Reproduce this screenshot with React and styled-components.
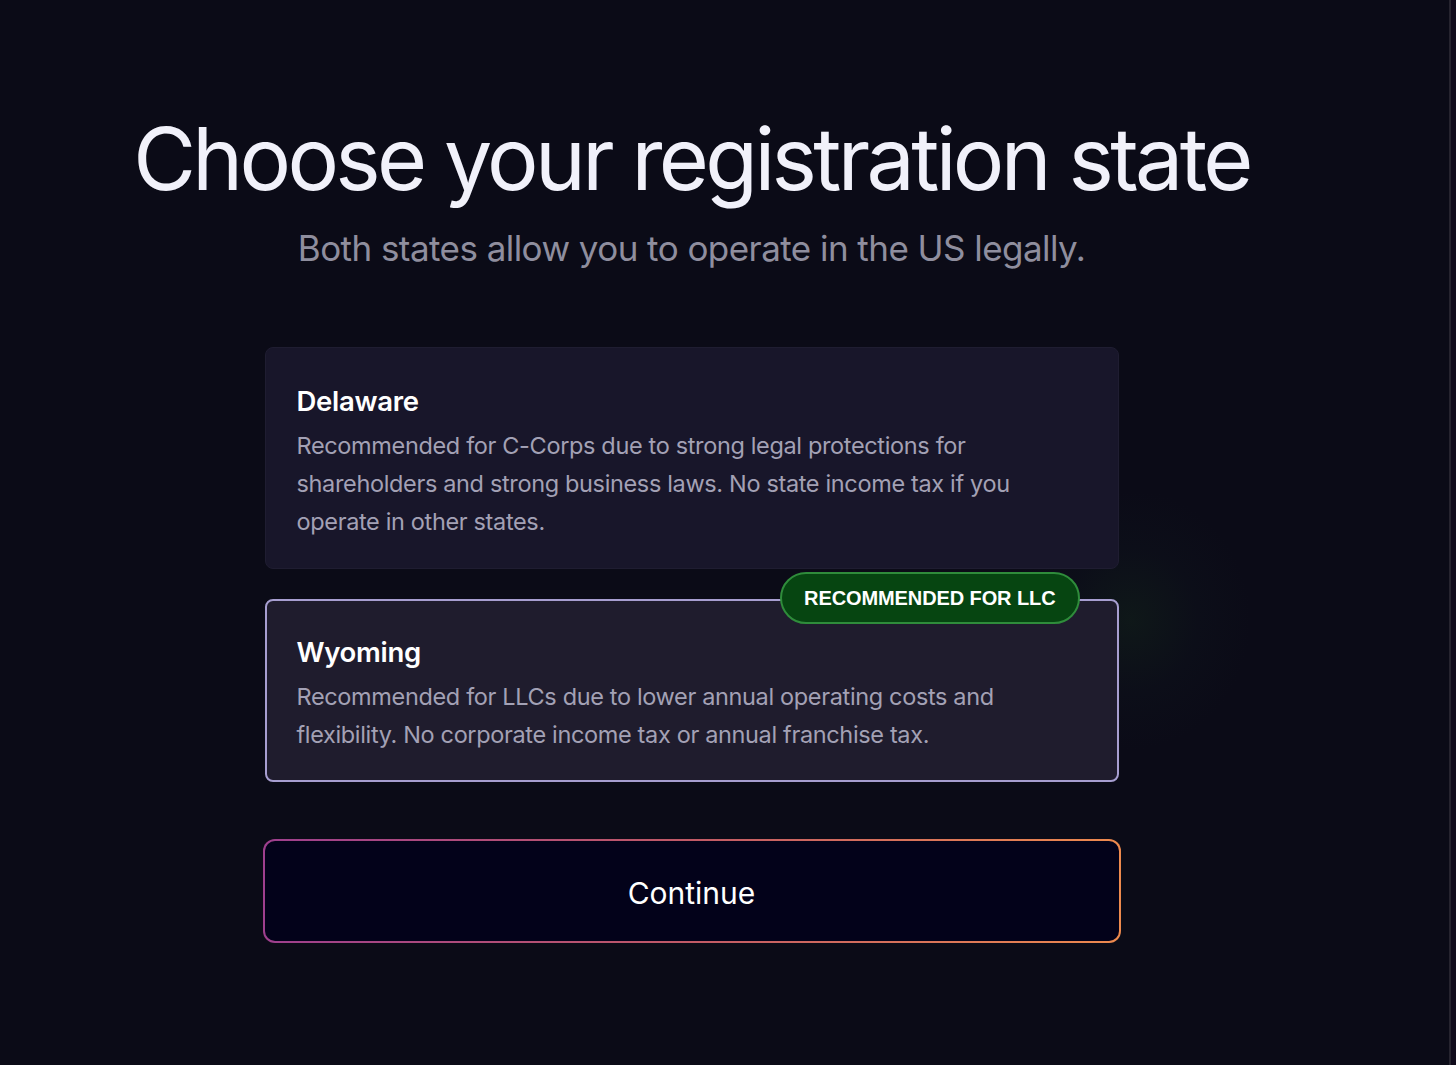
import React from 'react';
import styled, { createGlobalStyle } from 'styled-components';

const GlobalStyle = createGlobalStyle`
    html, body {
        margin: 0;
        padding: 0;
        background: #0b0b17;
    }
    body {
        font-family: Inter, "Noto Sans", sans-serif;
        color: #f2f2fa;
    }
`;

const Layout = styled.div`
    display: flex;
    min-height: 1065px;
    background: #0b0b17;
`;

const Main = styled.main`
    flex: 1;
    display: flex;
    flex-direction: column;
    align-items: center;
    padding: 107px 66px 0 0;
`;

const Edge = styled.div`
    width: 5px;
    border-left: 2px solid #26242f;
    background: #100b1b;
`;

const Title = styled.h1`
    margin: 0;
    font-size: 86px;
    font-weight: 400;
    letter-spacing: -3.65px;
    line-height: 104px;
    color: #f1f1fa;
`;

const Subtitle = styled.p`
    margin: 16px 0 0;
    font-size: 35px;
    font-weight: 400;
    letter-spacing: -0.55px;
    color: #8f8e9e;
`;

const Options = styled.div`
    position: relative;
    isolation: isolate;
    display: flex;
    flex-direction: column;
    gap: 30px;
    width: 854px;
    margin-top: 78px;
`;

const Glow = styled.div`
    position: absolute;
    right: -132px;
    top: 143px;
    width: 240px;
    height: 260px;
    border-radius: 50%;
    background: radial-gradient(closest-side, rgba(18, 34, 26, 0.55) 0%, rgba(14, 20, 28, 0.35) 55%, rgba(11, 11, 23, 0) 100%);
    pointer-events: none;
    z-index: -1;
`;

const Card = styled.div`
    position: relative;
    box-sizing: border-box;
    padding: ${p => (p.$selected ? '34px 30px 26px' : '36px 31px 27px')};
    border-radius: 8px;
    background: ${p => (p.$selected ? '#1f1c2d' : '#18162a')};
    border: ${p => (p.$selected ? '2px solid #a79ed0' : '1px solid #1f1d31')};
`;

const Name = styled.h2`
    margin: 0;
    font-size: 27.5px;
    font-weight: 600;
    letter-spacing: -0.3px;
    color: #ffffff;
`;

const Text = styled.p`
    margin: 9px 0 0;
    max-width: 740px;
    font-size: 23.5px;
    line-height: 38px;
    letter-spacing: -0.35px;
    color: #a3a1b5;
`;

const Badge = styled.span`
    position: absolute;
    top: -29px;
    right: 37px;
    box-sizing: border-box;
    height: 52px;
    padding: 0 22px;
    display: flex;
    align-items: center;
    border-radius: 26px;
    background: #064511;
    border: 2px solid #2f8c3b;
    font-family: "Liberation Sans", Arial, sans-serif;
    font-size: 20px;
    font-weight: 700;
    color: #ffffff;
    letter-spacing: -0.1px;
`;

const ContinueButton = styled.button`
    margin-top: 57px;
    width: 858px;
    height: 104px;
    padding-top: 4px;
    box-sizing: border-box;
    border: 2px solid transparent;
    border-radius: 12px;
    background:
        linear-gradient(#03021a, #03021a) padding-box,
        linear-gradient(90deg, #9e3f8e, #c25a66 50%, #ee8a4e) border-box;
    font-family: Inter, "Noto Sans", sans-serif;
    font-size: 30px;
    font-weight: 400;
    color: #ffffff;
    cursor: pointer;
`;

const states = [
    {
        name: 'Delaware',
        text: 'Recommended for C-Corps due to strong legal protections for shareholders and strong business laws. No state income tax if you operate in other states.',
    },
    {
        name: 'Wyoming',
        text: 'Recommended for LLCs due to lower annual operating costs and flexibility. No corporate income tax or annual franchise tax.',
        selected: true,
        badge: 'RECOMMENDED FOR LLC',
    },
];

const App = () => {
    return (
        <Layout>
            <GlobalStyle />
            <Main>
                <Title>Choose your registration state</Title>
                <Subtitle>Both states allow you to operate in the US legally.</Subtitle>
                <Options>
                    <Glow />
                    {states.map(s => (
                        <Card key={s.name} $selected={s.selected}>
                            {s.badge && <Badge>{s.badge}</Badge>}
                            <Name>{s.name}</Name>
                            <Text>{s.text}</Text>
                        </Card>
                    ))}
                </Options>
                <ContinueButton>Continue</ContinueButton>
            </Main>
            <Edge />
        </Layout>
    );
};

export default App;
